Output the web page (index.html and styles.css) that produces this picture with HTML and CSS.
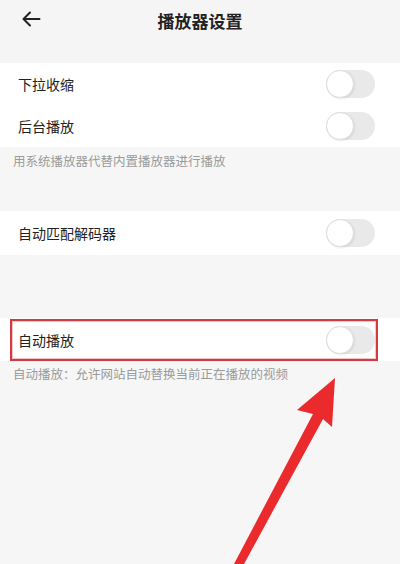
FILE: index.html
```html
<!DOCTYPE html>
<html lang="zh">
<head>
<meta charset="utf-8">
<link rel="stylesheet" href="styles.css">
</head>
<body>
<div class="page">
  <header class="header">
    <div class="bar">
      <svg class="back" width="20" height="16" viewBox="0 0 20 16"><path d="M9 1.5 L2.5 8 L9 14.5 M2.5 8 H18.5" fill="none" stroke="#222" stroke-width="2" stroke-linecap="round" stroke-linejoin="round"/></svg>
      <div class="title">播放器设置</div>
    </div>
  </header>

  <section class="group">
    <div class="row"><span class="label">下拉收缩</span><span class="toggle"></span></div>
    <div class="row"><span class="label">后台播放</span><span class="toggle"></span></div>
  </section>
  <div class="hint hint-first">用系统播放器代替内置播放器进行播放</div>

  <section class="group">
    <div class="row row-tall"><span class="label">自动匹配解码器</span><span class="toggle"></span></div>
  </section>

  <section class="group group-auto">
    <div class="row row-mid highlighted"><span class="label">自动播放</span><span class="toggle"></span></div>
  </section>
  <div class="hint hint-second">自动播放：允许网站自动替换当前正在播放的视频</div>

  <svg class="arrow" width="400" height="564" viewBox="0 0 400 564">
    <polygon points="335,378 332,427 323,419 244,564 234,564 313,414 297,410" fill="#ea2a2c"/>
  </svg>
</div>
</body>
</html>
```

FILE: styles.css
```css
html, body {
  margin: 0;
  padding: 0;
}
body {
  background: #f6f6f6;
  font-family: "Noto Sans CJK SC", "Noto Sans", sans-serif;
  color: #222;
}
.page {
  position: relative;
  width: 400px;
  height: 564px;
  overflow: hidden;
  background: #f6f6f6;
}
.header {
  height: 63px;
  background: #f5f5f5;
}
.bar {
  position: relative;
  height: 40px;
  display: flex;
  align-items: center;
  justify-content: center;
}
.back {
  position: absolute;
  left: 21px;
  top: 11px;
}
.title {
  font-size: 17px;
  font-weight: 700;
  color: #222;
  letter-spacing: 0;
}
.group {
  background: #fff;
}
.row {
  height: 42px;
  display: flex;
  align-items: center;
  justify-content: space-between;
  padding: 0 25px 0 18px;
  position: relative;
}
.row-tall {
  height: 44px;
}
.row-mid {
  height: 43px;
}
.label {
  font-size: 14px;
  color: #222;
}
.toggle {
  position: relative;
  width: 49px;
  height: 28px;
  border-radius: 14px;
  background: #e9e9e9;
}
.toggle::before {
  content: "";
  position: absolute;
  left: 0;
  top: 0;
  width: 26px;
  height: 26px;
  border-radius: 50%;
  background: #fff;
  border: 1px solid #dedede;
  box-shadow: 1px 1px 2px rgba(0,0,0,0.08);
}
.hint {
  font-size: 12.5px;
  color: #9a9a9a;
  padding-left: 13px;
  line-height: 16px;
}
.hint-first {
  padding-top: 6px;
  height: 58px;
}
.group-auto {
  margin-top: 63px;
}
.hint-second {
  padding-top: 5px;
}
.highlighted::after {
  content: "";
  position: absolute;
  left: 10px;
  top: 1px;
  width: 368px;
  height: 42px;
  box-sizing: border-box;
  border: 2px solid #d23a42;
  box-shadow: inset 0 0 0 1px #f4c4c6;
}
.arrow {
  position: absolute;
  left: 0;
  top: 0;
}
```
